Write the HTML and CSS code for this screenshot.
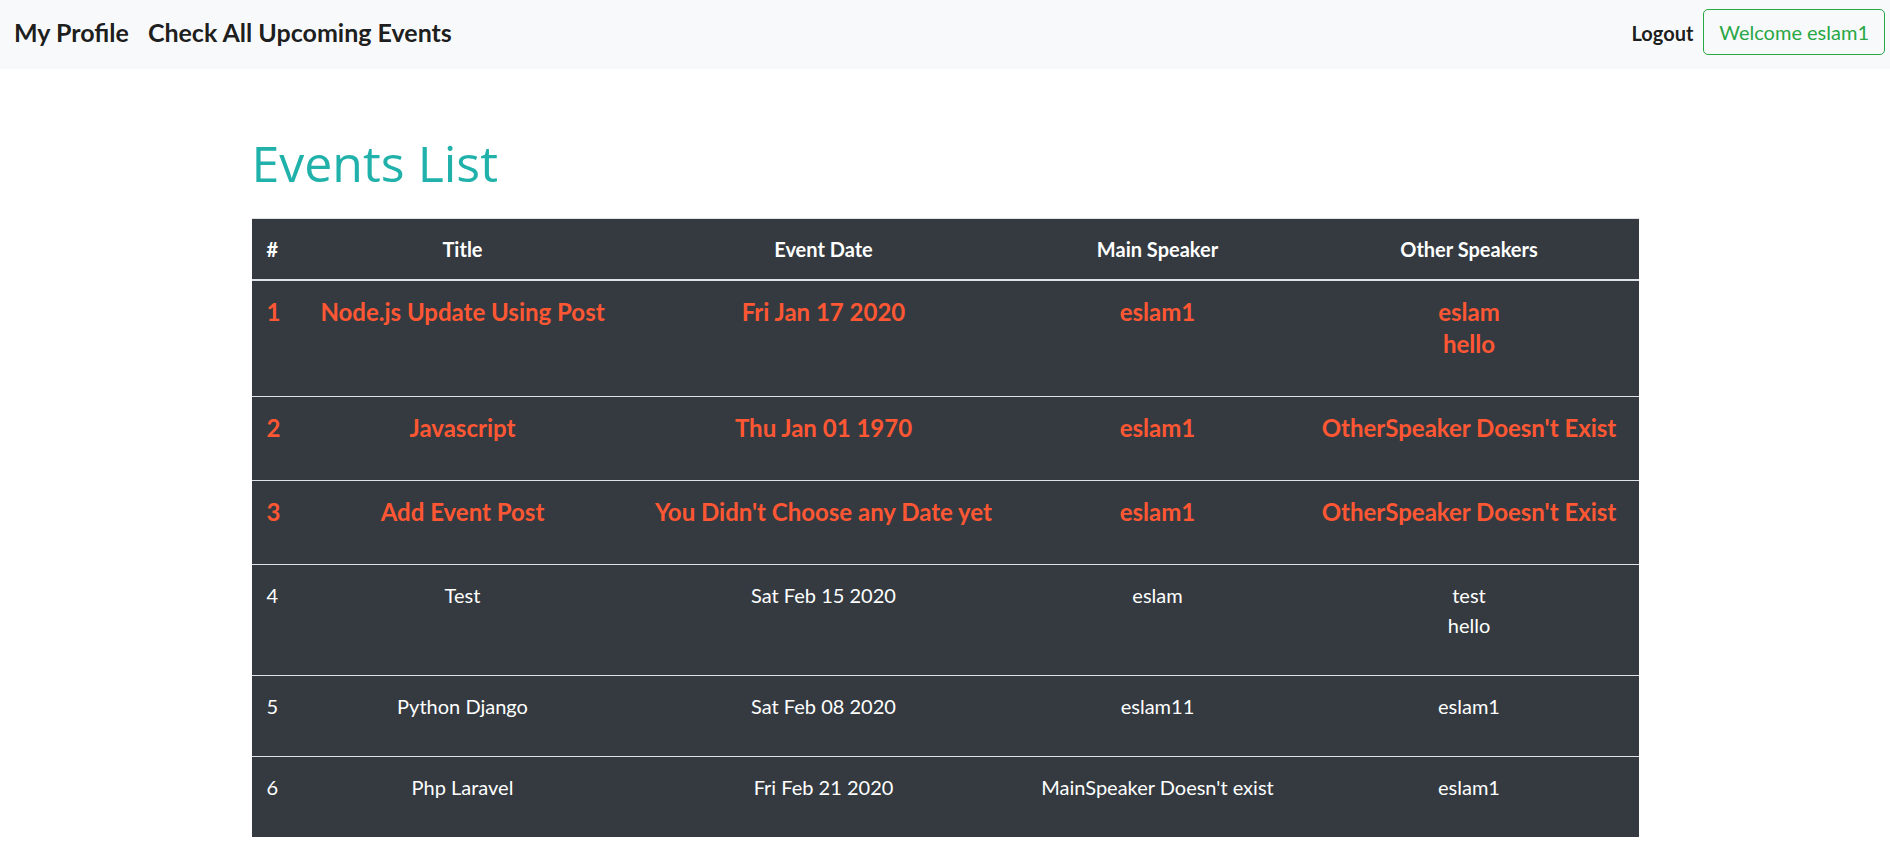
FILE: index.html
```html
<!DOCTYPE html>
<html lang="en">
<head>
<meta charset="utf-8">
<title>Events List</title>
<link rel="stylesheet" href="styles.css">
</head>
<body>
<nav class="navbar">
  <div class="nav-left">
    <a class="brand" href="#">My Profile</a>
    <a class="brand" href="#">Check All Upcoming Events</a>
  </div>
  <div class="nav-right">
    <a class="logout" href="#">Logout</a>
    <button class="btn-welcome" type="button">Welcome eslam1</button>
  </div>
</nav>

<main class="container">
  <h1 class="page-title">Events List</h1>
  <table class="events">
    <colgroup>
      <col class="c-num">
      <col class="c-title">
      <col class="c-date">
      <col class="c-main">
      <col class="c-other">
    </colgroup>
    <thead>
      <tr>
        <th>#</th>
        <th>Title</th>
        <th>Event Date</th>
        <th>Main Speaker</th>
        <th>Other Speakers</th>
      </tr>
    </thead>
    <tbody>
      <tr class="mine">
        <td><div class="cell">1</div></td>
        <td><div class="cell">Node.js Update Using Post</div></td>
        <td><div class="cell">Fri Jan 17 2020</div></td>
        <td><div class="cell">eslam1</div></td>
        <td><div class="cell"><div>eslam</div><div>hello</div></div></td>
      </tr>
      <tr class="mine">
        <td><div class="cell">2</div></td>
        <td><div class="cell">Javascript</div></td>
        <td><div class="cell">Thu Jan 01 1970</div></td>
        <td><div class="cell">eslam1</div></td>
        <td><div class="cell">OtherSpeaker Doesn't Exist</div></td>
      </tr>
      <tr class="mine">
        <td><div class="cell">3</div></td>
        <td><div class="cell">Add Event Post</div></td>
        <td><div class="cell">You Didn't Choose any Date yet</div></td>
        <td><div class="cell">eslam1</div></td>
        <td><div class="cell">OtherSpeaker Doesn't Exist</div></td>
      </tr>
      <tr>
        <td><p class="cell">4</p></td>
        <td><p class="cell">Test</p></td>
        <td><p class="cell">Sat Feb 15 2020</p></td>
        <td><p class="cell">eslam</p></td>
        <td><p class="cell">test<br>hello</p></td>
      </tr>
      <tr>
        <td><p class="cell">5</p></td>
        <td><p class="cell">Python Django</p></td>
        <td><p class="cell">Sat Feb 08 2020</p></td>
        <td><p class="cell">eslam11</p></td>
        <td><p class="cell">eslam1</p></td>
      </tr>
      <tr>
        <td><p class="cell">6</p></td>
        <td><p class="cell">Php Laravel</p></td>
        <td><p class="cell">Fri Feb 21 2020</p></td>
        <td><p class="cell">MainSpeaker Doesn't exist</p></td>
        <td><p class="cell">eslam1</p></td>
      </tr>
    </tbody>
  </table>
</main>
</body>
</html>
```

FILE: styles.css
```css
* { box-sizing: border-box; }

html, body {
  margin: 0;
  padding: 0;
  background: #fff;
}

body {
  font-family: Lato, "Open Sans", "DejaVu Sans", sans-serif;
  font-size: 20px;
  line-height: 1.5;
  color: #212529;
}

a { text-decoration: none; }

.navbar {
  display: flex;
  align-items: center;
  justify-content: space-between;
  height: 69px;
  padding: 0 5px 6px 14px;
  background: #f8f9fa;
}

.nav-left {
  display: flex;
  align-items: center;
  gap: 19px;
}

.brand {
  font-size: 25px;
  font-weight: 700;
  line-height: 30px;
  color: rgba(0, 0, 0, 0.9);
}

.nav-right {
  display: flex;
  align-items: center;
  gap: 10px;
}

.logout {
  font-size: 20px;
  font-weight: 700;
  line-height: 30px;
  color: rgba(0, 0, 0, 0.9);
  padding-top: 2px;
}

.btn-welcome {
  font-family: inherit;
  font-size: 20px;
  line-height: 30px;
  padding: 7px 15px;
  border: 1px solid #28a745;
  border-radius: 5px;
  background: transparent;
  color: #28a745;
}

.container {
  width: 1387px;
  margin: 0 auto;
}

.page-title {
  margin: 64px 0 25px;
  font-family: "Open Sans", Lato, sans-serif;
  font-size: 50px;
  font-weight: 500;
  line-height: 60px;
  color: #20b2aa;
}

.events {
  width: 100%;
  table-layout: fixed;
  border-collapse: collapse;
  background: #343a40;
  color: #fff;
  text-align: center;
  margin-bottom: 20px;
}

.c-num { width: 42px; }
.c-title { width: 338px; }
.c-date { width: 384px; }
.c-main { width: 284px; }
.c-other { width: 339px; }

.events th {
  padding: 15px;
  font-weight: 700;
  line-height: 30px;
  vertical-align: bottom;
  border-top: 1px solid #dee2e6;
  border-bottom: 2px solid #dee2e6;
}

.events td {
  padding: 15px;
  vertical-align: top;
  border-top: 1px solid #dee2e6;
  white-space: nowrap;
}

.events th:first-child,
.events td:first-child {
  text-align: left;
}

.events tbody tr:first-child td { border-top: 0; }

.mine .cell {
  margin: 0 0 21px;
  font-size: 24px;
  font-weight: 700;
  line-height: 32px;
  color: #ff5733;
}

.events p.cell {
  margin: 0 0 20px;
  line-height: 30px;
}
```
